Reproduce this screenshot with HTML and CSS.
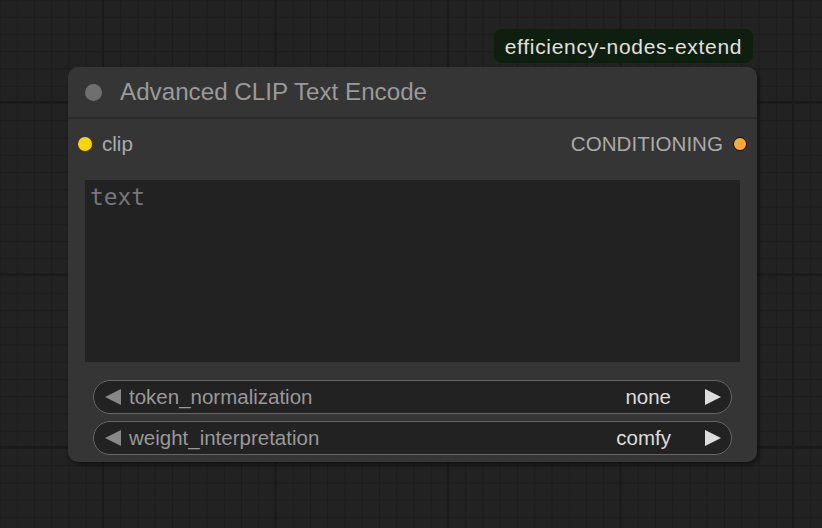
FILE: index.html
```html
<!DOCTYPE html>
<html>
<head>
<meta charset="utf-8">
<link rel="stylesheet" href="styles.css">
</head>
<body>
<div class="canvas">
  <div class="badge">efficiency-nodes-extend</div>
  <div class="node">
    <div class="title">
      <span class="title-dot"></span>
      <span class="title-text">Advanced CLIP Text Encode</span>
    </div>
    <div class="body">
      <div class="slots">
        <div class="slot slot-in"><span class="dot dot-clip"></span><span>clip</span></div>
        <div class="slot slot-out"><span>CONDITIONING</span><span class="dot dot-cond"></span></div>
      </div>
      <div class="textarea">text</div>
      <div class="widgets">
        <div class="combo">
          <span class="arrow arrow-left"></span>
          <span class="label">token_normalization</span>
          <span class="value">none</span>
          <span class="arrow arrow-right"></span>
        </div>
        <div class="combo">
          <span class="arrow arrow-left"></span>
          <span class="label">weight_interpretation</span>
          <span class="value">comfy</span>
          <span class="arrow arrow-right"></span>
        </div>
      </div>
    </div>
  </div>
</div>
</body>
</html>
```
FILE: styles.css
```css
html, body {
  margin: 0;
  padding: 0;
  width: 822px;
  height: 528px;
  overflow: hidden;
}
.canvas {
  position: relative;
  width: 822px;
  height: 528px;
  background-color: #222222;
  background-image:
    linear-gradient(to right, #1a1a1a 0 2px, transparent 2px),
    linear-gradient(to bottom, #1a1a1a 0 2px, transparent 2px),
    linear-gradient(to right, #1c1c1c 0 1px, transparent 1px),
    linear-gradient(to bottom, #1c1c1c 0 1px, transparent 1px);
  background-size: 172.5px 172.5px, 172.5px 172.5px, 17.25px 17.25px, 17.25px 17.25px;
  background-position: 102px 0, 0 101px, -0.5px 0, 0 -0.5px;
  font-family: "Liberation Sans", Arial, sans-serif;
}
.badge {
  position: absolute;
  left: 494px;
  top: 29px;
  width: 259px;
  height: 34px;
  box-sizing: border-box;
  background: #0f1f0f;
  border-radius: 8px;
  color: #e0e0e0;
  font-size: 21px;
  letter-spacing: 0.7px;
  line-height: 35px;
  text-align: center;
  white-space: nowrap;
}
.node {
  position: absolute;
  left: 68px;
  top: 67px;
  width: 689px;
  height: 395px;
  background: #353535;
  border-radius: 10px;
  box-shadow: 2px 3px 4px rgba(0,0,0,0.45);
  display: flex;
  flex-direction: column;
}
.title {
  height: 52px;
  box-sizing: border-box;
  border-bottom: 2px solid #2b2b2b;
  background: #353535;
  border-radius: 10px 10px 0 0;
  display: flex;
  align-items: center;
  padding-left: 17px;
  gap: 18px;
}
.title-dot {
  width: 17px;
  height: 17px;
  border-radius: 50%;
  background: #6f6f6f;
}
.title-text {
  color: #9a9a9a;
  font-size: 24.2px;
  line-height: 1;
}
.body {
  flex: 1;
  display: flex;
  flex-direction: column;
  padding: 0 17px 7px 17px;
}
.slots {
  height: 48px;
  display: flex;
  justify-content: space-between;
  align-items: center;
  margin-left: -7px;
  margin-right: -7px;
  padding-top: 1px;
}
.slot {
  display: flex;
  align-items: center;
  gap: 10px;
  color: #aaaaaa;
  font-size: 20.6px;
}
.slot-out { gap: 10px; }
.dot {
  width: 14px;
  height: 14px;
  border-radius: 50%;
  box-sizing: border-box;
}
.dot-clip { background: #ffd500; }
.dot-cond { background: #ffa931; border: 1.5px solid #111; }
.textarea {
  margin-top: 12px;
  height: 182px;
  background: #222222;
  color: #777777;
  font-family: "DejaVu Sans Mono", monospace;
  font-size: 22.8px;
  line-height: 1;
  padding: 6px 5px;
  box-sizing: border-box;
}
.widgets {
  margin-top: 18px;
  display: flex;
  flex-direction: column;
  gap: 7px;
  padding: 0 8px;
}
.combo {
  height: 34px;
  box-sizing: border-box;
  border: 1.5px solid #666666;
  border-radius: 17px;
  background: #222222;
  display: flex;
  align-items: center;
  padding: 0 10px 0 11px;
  font-size: 20.5px;
}
.arrow {
  width: 0;
  height: 0;
  border-top: 8.5px solid transparent;
  border-bottom: 8.5px solid transparent;
}
.arrow-left {
  border-right: 16px solid #888888;
}
.arrow-right {
  border-left: 16px solid #dddddd;
}
.label {
  color: #999999;
  margin-left: 8px;
  flex: 1;
}
.value {
  color: #dddddd;
  margin-right: 34px;
}
```
